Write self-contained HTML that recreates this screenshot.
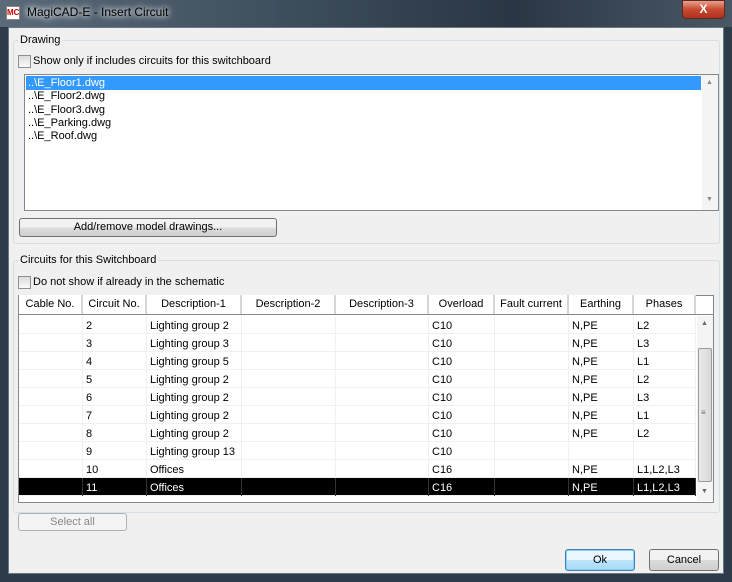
<!DOCTYPE html><html><head><style>
*{box-sizing:border-box;margin:0;padding:0}
body{width:732px;height:582px;overflow:hidden;background:#2e3b48;font-family:"Liberation Sans",sans-serif;font-size:11px;color:#000;position:relative}
.a{position:absolute}
.title{left:0;top:0;width:732px;height:27px;background:linear-gradient(90deg,#5a6a78,#3d4d5c 40%,#2a3643 70%,#4a5866);}
.client{left:8px;top:27px;width:716px;height:547px;background:#f0f0f0;border:1px solid #6a7886}
.grp{border:1px solid #d5dfe5;border-radius:3px}
.lbl{background:#f0f0f0;padding:0 2px}
.cb{width:13px;height:13px;border:1px solid #8e8f8f;background:linear-gradient(#dcdcdc,#fafafa)}
.btn{border:1px solid #707070;border-radius:3px;background:linear-gradient(#f2f2f2 50%,#dddddd 50%,#cfcfcf);text-align:center}
.row{height:18px;border-bottom:1px solid #f0f0f0}
.cell{position:absolute;top:0;height:18px;line-height:18px;padding-left:3px;border-right:1px solid #f0f0f0}
.hd{position:absolute;top:0;height:19px;line-height:19px;text-align:center;border-right:2px solid #d5d5d5;background:#fff}
</style></head><body>
<div class="a title"></div>
<div class="a" style="left:6px;top:6px;width:14px;height:14px;background:#fff;border:1px solid #888;font:bold 8px 'Liberation Sans';color:#c00;line-height:12px;text-align:center">MC</div>
<div class="a" style="left:27px;top:5px;font-size:12px;color:#000;text-shadow:0 0 6px #fff,0 0 8px #fff">MagiCAD-E - Insert Circuit</div>
<div class="a" style="left:682px;top:0;width:43px;height:19px;border-radius:0 0 4px 4px;background:linear-gradient(#e8a090,#c84a30 50%,#b03020);border:1px solid #5a2a20;color:#fff;font-weight:bold;font-size:12px;text-align:center;line-height:17px">X</div>
<div class="a client"></div>
<div class="a grp" style="left:13px;top:40px;width:707px;height:204px"></div>
<div class="a lbl" style="left:18px;top:34px">Drawing</div>
<div class="a cb" style="left:18px;top:55px"></div>
<div class="a" style="left:33px;top:55px">Show only if includes circuits for this switchboard</div>
<div class="a" style="left:24px;top:74px;width:695px;height:137px;background:#fff;border:1px solid #828790"></div>
<div class="a" style="left:26px;top:76px;width:675px;height:14px;background:#3399ff"></div>
<div class="a" style="left:28px;top:77px;line-height:13.3px"><span style="color:#fff">..\E_Floor1.dwg</span><br>..\E_Floor2.dwg<br>..\E_Floor3.dwg<br>..\E_Parking.dwg<br>..\E_Roof.dwg</div>
<div class="a" style="left:702px;top:75px;width:16px;height:135px;background:#f4f4f4"></div>
<div class="a" style="left:706px;top:79px;color:#888;font-size:7px">▲</div>
<div class="a" style="left:706px;top:196px;color:#888;font-size:7px">▼</div>
<div class="a btn" style="left:19px;top:218px;width:258px;height:19px;line-height:17px">Add/remove model drawings...</div>
<div class="a grp" style="left:13px;top:260px;width:707px;height:253px"></div>
<div class="a lbl" style="left:18px;top:254px">Circuits for this Switchboard</div>
<div class="a cb" style="left:18px;top:276px"></div>
<div class="a" style="left:33px;top:276px">Do not show if already in the schematic</div>
<div class="a" style="left:18px;top:295px;width:696px;height:208px;background:#fff;border:1px solid #828790"></div>
<div class="a" style="left:19px;top:295px;width:677px;height:20px">
<div class="hd" style="left:0;width:64px">Cable No.</div>
<div class="hd" style="left:64px;width:64px">Circuit No.</div>
<div class="hd" style="left:128px;width:95px">Description-1</div>
<div class="hd" style="left:223px;width:94px">Description-2</div>
<div class="hd" style="left:317px;width:93px">Description-3</div>
<div class="hd" style="left:410px;width:66px">Overload</div>
<div class="hd" style="left:476px;width:74px">Fault current</div>
<div class="hd" style="left:550px;width:65px">Earthing</div>
<div class="hd" style="left:615px;width:62px">Phases</div>
</div>
<div class="a" style="left:18px;top:314px;width:696px;border-top:1px solid #828790"></div>
<div class="a" style="left:19px;top:316px;width:677px" id="t"></div>
<div class="a" style="left:697px;top:316px;width:16px;height:185px;background:#f4f4f4"></div>
<div class="a" style="left:698px;top:348px;width:14px;height:134px;background:linear-gradient(90deg,#eaeaea,#d8d8d8);border:1px solid #9a9a9a;border-radius:2px"></div>
<div class="a" style="left:701px;top:408px;font-size:8px;color:#666">≡</div>
<div class="a" style="left:701px;top:320px;color:#666;font-size:7px">▲</div>
<div class="a" style="left:701px;top:488px;color:#666;font-size:7px">▼</div>
<div class="a btn" style="left:18px;top:513px;width:109px;height:18px;line-height:16px;color:#888;border-color:#adb2b5;background:#f4f4f4">Select all</div>
<div class="a btn" style="left:565px;top:549px;width:70px;height:22px;line-height:20px;border-color:#3c7fb1;background:linear-gradient(#eaf6fd 50%,#bee6fd 50%,#a7d9f5);box-shadow:inset 0 0 0 1px #8fd0f4">Ok</div>
<div class="a btn" style="left:649px;top:549px;width:70px;height:22px;line-height:20px">Cancel</div>
<script>
var d=[["2","Lighting group 2","C10","N,PE","L2"],["3","Lighting group 3","C10","N,PE","L3"],["4","Lighting group 5","C10","N,PE","L1"],["5","Lighting group 2","C10","N,PE","L2"],["6","Lighting group 2","C10","N,PE","L3"],["7","Lighting group 2","C10","N,PE","L1"],["8","Lighting group 2","C10","N,PE","L2"],["9","Lighting group 13","C10","",""],["10","Offices","C16","N,PE","L1,L2,L3"],["11","Offices","C16","N,PE","L1,L2,L3"]];
var c=[[0,64],[64,64],[128,95],[223,94],[317,93],[410,66],[476,74],[550,65],[615,62]],h="";
d.forEach(function(r,i){var v=["",r[0],r[1],"","",r[2],"",r[3],r[4]];var s=i==9?"background:#000;color:#fff;":"";h+='<div class="row" style="position:absolute;left:0;width:677px;top:'+(i*18)+'px;'+s+'">';c.forEach(function(k,j){h+='<div class="cell" style="left:'+k[0]+'px;width:'+k[1]+'px;padding-top:1px;'+(i==9?'border-color:#333':'')+'">'+v[j]+'</div>'});h+='</div>'});
document.getElementById("t").innerHTML=h;
</script>
</body></html>
